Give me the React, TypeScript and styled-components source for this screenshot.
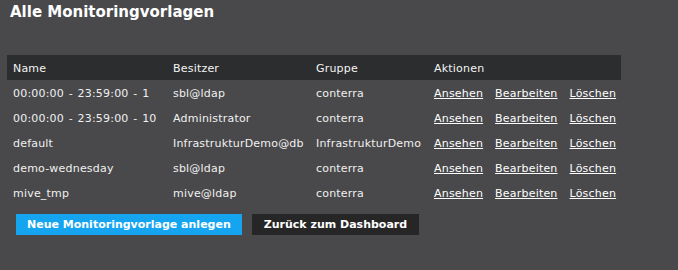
import styled, { createGlobalStyle } from "styled-components";

const GlobalStyle = createGlobalStyle`
  html, body {
    margin: 0;
    padding: 0;
    background: #49494b;
  }
  body {
    font-family: "DejaVu Sans", Verdana, sans-serif;
    font-size: 11px;
    color: #f0f0f0;
  }
`;

interface Template {
  name: string;
  owner: string;
  group: string;
}

const templates: Template[] = [
  { name: "00:00:00 - 23:59:00 - 1", owner: "sbl@ldap", group: "conterra" },
  { name: "00:00:00 - 23:59:00 - 10", owner: "Administrator", group: "conterra" },
  { name: "default", owner: "InfrastrukturDemo@db", group: "InfrastrukturDemo" },
  { name: "demo-wednesday", owner: "sbl@ldap", group: "conterra" },
  { name: "mive_tmp", owner: "mive@ldap", group: "conterra" },
];

export default function App() {
  return (
    <>
      <GlobalStyle />
      <Page>
        <Title>Alle Monitoringvorlagen</Title>
        <Table>
          <colgroup>
            <col style={{ width: 160 }} />
            <col style={{ width: 143 }} />
            <col style={{ width: 118 }} />
            <col style={{ width: 193 }} />
          </colgroup>
          <thead>
            <tr>
              <Th>Name</Th>
              <Th>Besitzer</Th>
              <Th>Gruppe</Th>
              <Th>Aktionen</Th>
            </tr>
          </thead>
          <tbody>
            {templates.map((t) => (
              <tr key={t.name}>
                <Td>{t.name}</Td>
                <Td>{t.owner}</Td>
                <Td>{t.group}</Td>
                <Td>
                  <Actions>
                    <Link href="#">Ansehen</Link>
                    <Link href="#">Bearbeiten</Link>
                    <Link href="#">Löschen</Link>
                  </Actions>
                </Td>
              </tr>
            ))}
          </tbody>
        </Table>
        <ButtonRow>
          <Button $primary>Neue Monitoringvorlage anlegen</Button>
          <Button>Zurück zum Dashboard</Button>
        </ButtonRow>
      </Page>
    </>
  );
}

const Page = styled.div`
  display: flex;
  flex-direction: column;
  align-items: flex-start;
  padding: 2px 0 0 7px;
  height: 268px;
`;

const Title = styled.h1`
  margin: 0 0 0 3px;
  font-size: 15px;
  font-weight: bold;
  color: #ffffff;
  line-height: 20px;
`;

const Table = styled.table`
  margin-top: 33px;
  border-collapse: collapse;
  table-layout: fixed;
  width: 614px;
  letter-spacing: 0.2px;
  word-spacing: 1px;
`;

const Th = styled.th`
  background: #2c2d2f;
  height: 24px;
  padding: 1px 6px 0;
  text-align: left;
  font-weight: normal;
  color: #f4f4f4;
`;

const Td = styled.td`
  height: 24px;
  padding: 1px 6px 0;
  white-space: nowrap;
  color: #f0f0f0;
`;

const Actions = styled.div`
  display: flex;
  gap: 12px;
`;

const Link = styled.a`
  color: #ffffff;
  text-decoration: underline;
`;

const ButtonRow = styled.div`
  display: flex;
  gap: 10px;
  margin: 9px 0 0 9px;
`;

const Button = styled.button<{ $primary?: boolean }>`
  height: 21px;
  padding: 0 ${(p) => (p.$primary ? "11px" : "12px")};
  border: none;
  background: ${(p) => (p.$primary ? "#15a5f0" : "#262626")};
  color: #ffffff;
  font-family: "DejaVu Sans", Verdana, sans-serif;
  font-size: 11px;
  font-weight: bold;
  cursor: pointer;
`;
